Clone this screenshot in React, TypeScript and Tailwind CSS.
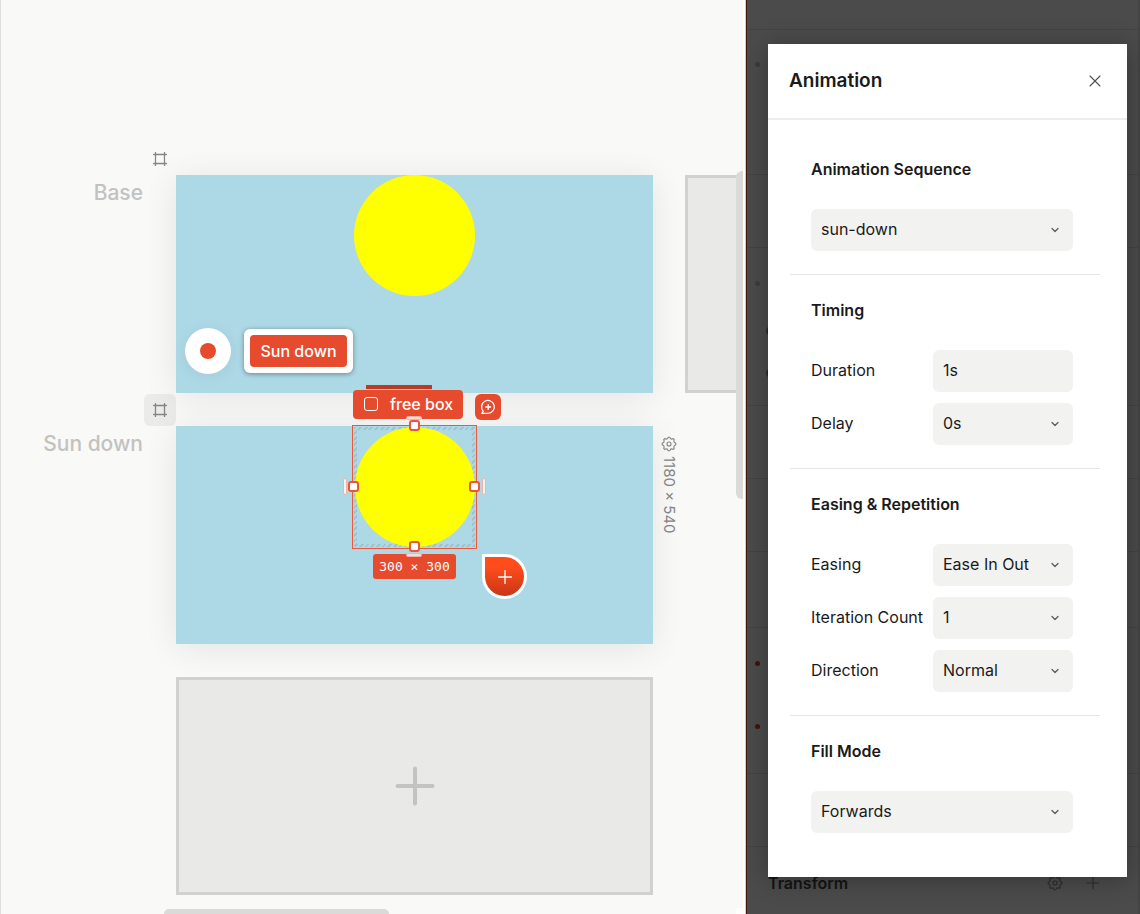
import type { ReactNode } from "react";
import { ChevronDown, Plus, X } from "lucide-react";

function GearIcon({ className = "" }: { className?: string }) {
  return (
    <svg viewBox="0 0 16 16" className={className} fill="none" stroke="currentColor" strokeWidth="1.1" strokeLinejoin="round" aria-hidden="true">
      <path d="M6.7 2.3 7.3 1.2h1.4l.6 1.1c.3.6 1 .9 1.7.7l1.3-.4 1 1-.4 1.3c-.2.7.1 1.4.7 1.7l1.2.7v1.4l-1.2.7c-.6.3-.9 1-.7 1.7l.4 1.3-1 1-1.3-.4c-.7-.2-1.4.1-1.7.7l-.6 1.1H7.3l-.6-1.1c-.3-.6-1-.9-1.7-.7l-1.3.4-1-1 .4-1.3c.2-.7-.1-1.4-.7-1.7l-1.2-.7V7.3l1.2-.7c.6-.3.9-1 .7-1.7l-.4-1.3 1-1L5 3c.7.2 1.4-.1 1.7-.7Z" />
      <circle cx="8" cy="8" r="2" />
    </svg>
  );
}

function FrameIcon() {
  return (
    <svg viewBox="0 0 14 14" className="size-[14px]" fill="none" stroke="currentColor" strokeWidth="1.3" strokeLinecap="round" aria-hidden="true">
      <path d="M.6 2.5h12.8M.6 11.5h12.8M2.5.6v12.8M11.5.6v12.8" />
    </svg>
  );
}

function CommentPlusIcon() {
  return (
    <svg viewBox="0 0 16 16" className="size-4" fill="none" stroke="currentColor" strokeWidth="1.3" strokeLinecap="round" strokeLinejoin="round" aria-hidden="true">
      <path d="M3.2 12.2A6.4 6.4 0 1 1 8.2 14.3H1.8C2.6 13.8 3 13 3.200 12.200Z" />
      <path d="M8.200 5.600v4.800M5.800 8h4.800" />
    </svg>
  );
}

const fieldClass =
  "h-[42px] w-full appearance-none rounded-md bg-[#f2f2f0] pb-0.5 pl-[10px] pr-8 text-base text-[#1a1a1a] outline-none";

function SelectField({ id, value, label }: { id: string; value: string; label?: string }) {
  return (
    <div className="relative">
      <select id={id} aria-label={label} defaultValue={value} className={fieldClass}>
        <option>{value}</option>
      </select>
      <ChevronDown className="pointer-events-none absolute right-3 top-[15px] size-3 text-[#5c5c5c]" strokeWidth={2.5} />
    </div>
  );
}

function FieldRow({ id, label, children }: { id: string; label: string; children: ReactNode }) {
  return (
    <div className="flex items-center justify-between">
      <label htmlFor={id} className="whitespace-nowrap pb-0.5">{label}</label>
      <div className="w-[140px]">{children}</div>
    </div>
  );
}

function Section({ title, children }: { title: string; children: ReactNode }) {
  return (
    <section className="border-b border-[#e6e6e6] pb-[23px] pl-[21px] pr-[27px] pt-[23px] last:border-b-0 last:pb-11">
      <h3 className="mb-7 text-base font-semibold leading-6">{title}</h3>
      <div className="flex flex-col gap-[11px]">{children}</div>
    </section>
  );
}

function AnimationDialog() {
  return (
    <div
      role="dialog"
      aria-labelledby="dialog-title"
      className="absolute left-[21px] right-[13px] top-11 bg-white text-[#1a1a1a] shadow-[0_2px_24px_rgba(0,0,0,0.3)]"
    >
      <header className="flex h-[76px] items-center justify-between border-b-2 border-[#ededed] pl-[21px] pr-[22px]">
        <h2 id="dialog-title" className="text-[19px] font-semibold leading-6">Animation</h2>
        <button type="button" aria-label="Close" className="text-[#555]">
          <X className="size-5" strokeWidth={1.4} />
        </button>
      </header>
      <div className="pl-[22px] pr-[27px] pt-[14px]">
        <Section title="Animation Sequence">
          <SelectField id="sequence" label="Animation Sequence" value="sun-down" />
        </Section>
        <Section title="Timing">
          <FieldRow id="duration" label="Duration">
            <input id="duration" type="text" defaultValue="1s" className={fieldClass} />
          </FieldRow>
          <FieldRow id="delay" label="Delay">
            <SelectField id="delay" value="0s" />
          </FieldRow>
        </Section>
        <Section title="Easing &amp; Repetition">
          <FieldRow id="easing" label="Easing">
            <SelectField id="easing" value="Ease In Out" />
          </FieldRow>
          <FieldRow id="iterations" label="Iteration Count">
            <SelectField id="iterations" value="1" />
          </FieldRow>
          <FieldRow id="direction" label="Direction">
            <SelectField id="direction" value="Normal" />
          </FieldRow>
        </Section>
        <Section title="Fill Mode">
          <SelectField id="fill" label="Fill Mode" value="Forwards" />
        </Section>
      </div>
    </div>
  );
}

function Dot({ className }: { className: string }) {
  return <span className={`block size-[5px] rounded-full ${className}`} />;
}

function StylePanel() {
  return (
    <aside className="relative w-[394px] shrink-0 border-l border-[#4a170c] bg-[#4b4b4b]">
      <div className="flex flex-col divide-y divide-[#434343] border-r-2 border-[#444]">
        <div className="h-[30px]" />
        <div className="h-[145px] pl-2 pt-8"><Dot className="bg-[#3c3c3c]" /></div>
        <div className="h-[73px]" />
        <div className="h-[158px] pl-2 pt-[33px]">
          <Dot className="bg-[#3c3c3c]" />
          <div className="ml-[11px] mt-10 flex w-4 flex-col gap-8">
            <span className="h-[10px] rounded-full border-2 border-[#2b2b2b]" />
            <span className="h-[10px] rounded-full border-2 border-[#2b2b2b]" />
          </div>
        </div>
        <div className="h-[73px]" />
        <div className="h-[73px]" />
        <div className="h-[76px]" />
        <div className="flex h-[146px] flex-col gap-[58px] pl-2 pt-[33px]">
          <Dot className="bg-[#43140b]" />
          <Dot className="bg-[#43140b]" />
        </div>
        <div className="h-[73px]" />
        <div className="flex h-[67px] items-center justify-between pl-[21px] pr-[35px] pt-1">
          <h2 className="text-base font-semibold text-[#141414]">Transform</h2>
          <div className="flex items-center gap-5 text-[#2c2c2c]">
            <button type="button" aria-label="Transform settings"><GearIcon className="size-4" /></button>
            <button type="button" aria-label="Add transform"><Plus className="size-5" strokeWidth={1.3} /></button>
          </div>
        </div>
      </div>
      <AnimationDialog />
    </aside>
  );
}

function ArtboardLabel({ name, active = false }: { name?: string; active?: boolean }) {
  return (
    <div className="-mt-8 flex w-[175px] shrink-0 flex-col items-end">
      {name && (
        <>
          <button
            type="button"
            aria-label={`${name} frame`}
            className={`grid size-8 place-items-center rounded-md text-[#858585] ${active ? "bg-[#ebebea]" : ""}`}
          >
            <FrameIcon />
          </button>
          <p className="pr-[33px] pt-1 text-[21px] font-medium leading-7 text-[#c2c2c1]">{name}</p>
        </>
      )}
    </div>
  );
}

const artboardClass = "relative h-[218px] w-[477px] shrink-0 bg-[#add8e6] shadow-[0_4px_32px_rgba(0,0,0,0.09)]";
const emptyClass = "border-[3px] border-[#d1d1cf] bg-[#e9e9e8]";
const handleClass = "absolute size-[11px] rounded-[3px] border-2 border-[#e8573b] bg-white";
const spacingClass = "absolute rounded-full border border-[#f0b3a6] bg-white/80";

function Selection() {
  return (
    <>
      <div className="absolute -top-[41px] left-[190px] h-1 w-[66px] bg-[#bd3a22]" />
      <div className="absolute -top-9 left-[177px] flex h-[29px] w-[110px] items-center gap-3 rounded bg-[#e64b2e] pb-0.5 pl-[11px] text-base font-medium text-white">
        <span className="size-[14px] rounded-[3px] border-[1.5px] border-white" />
        free box
      </div>
      <button
        type="button"
        aria-label="Add comment"
        className="absolute -top-8 left-[299px] grid size-[26px] place-items-center rounded-md bg-[#e64b2e] text-white"
      >
        <CommentPlusIcon />
      </button>
      <div className="absolute -top-px left-44 h-[124px] w-[125px] border border-[#e9573c]">
        <div className="absolute inset-px bg-[repeating-linear-gradient(135deg,#a2c3cd_0px,#a2c3cd_2px,#add8e6_2px,#add8e6_4px)]">
          <div className="absolute inset-[3px] bg-[#add8e6]" />
        </div>
        <div className="absolute left-0.5 top-px size-[120px] rounded-full bg-[#ffff00]" />
        <span className={`${spacingClass} -top-2.5 left-[53px] h-1 w-4`} />
        <span className={`${spacingClass} -left-2.5 top-[52px] h-[17px] w-1`} />
        <span className={`${spacingClass} -right-2.5 top-[52px] h-[17px] w-1`} />
        <span className={`${handleClass} -top-1.5 left-14`} />
        <span className={`${handleClass} -bottom-1 left-14`} />
        <span className={`${handleClass} -left-[5px] top-[55px]`} />
        <span className={`${handleClass} -right-1 top-[55px]`} />
      </div>
      <div className="absolute left-[197px] top-32 flex h-[25px] w-[83px] items-center justify-center rounded-[3px] bg-[#e64b2e] font-['DejaVu_Sans_Mono',monospace] text-[13px] text-white">
        300 × 300
      </div>
      <span className={`${spacingClass} left-[230px] top-[127px] h-1 w-4`} />
      <button
        type="button"
        aria-label="Insert element"
        className="absolute left-[306px] top-32 grid size-[45px] place-items-center rounded-full rounded-tl-md border-[3px] border-white bg-linear-to-b from-[#ff4c1c] from-25% to-[#c83716] text-white"
      >
        <Plus className="size-[22px]" strokeWidth={1.4} />
      </button>
    </>
  );
}

function Canvas() {
  return (
    <main className="relative min-w-0 flex-1 overflow-hidden border-l border-[#dededd] bg-[#f9f9f8]">
      <div className="flex flex-col gap-[33px] pt-[175px]">
        <div className="flex">
          <ArtboardLabel name="Base" />
          <div className={`${artboardClass} flex flex-col justify-between`}>
            <div className="size-[121px] self-center rounded-full bg-[#ffff00]" />
            <div className="flex items-center gap-[13px] px-[9px] pb-[19px]">
              <button type="button" aria-label="Record" className="grid size-[46px] place-items-center rounded-full bg-white shadow-[0_2px_16px_rgba(0,0,0,0.06)]">
                <span className="size-4 rounded-full bg-[#e64b2e]" />
              </button>
              <div className="rounded-md bg-white p-[6px] shadow-[0_1px_5px_rgba(0,0,0,0.4)]">
                <button type="button" className="h-8 w-[97px] rounded bg-[#e64b2e] text-base font-medium text-white">
                  Sun down
                </button>
              </div>
            </div>
          </div>
          <div className={`ml-8 w-[477px] shrink-0 ${emptyClass}`} />
        </div>
        <div className="flex">
          <ArtboardLabel name="Sun down" active />
          <div className={artboardClass}>
            <Selection />
          </div>
          <div className="ml-1 flex items-center gap-1 self-start whitespace-nowrap pt-[10px] text-[15px] leading-6 text-[#858585] [text-orientation:sideways] [writing-mode:vertical-rl]">
            <GearIcon className="size-4" />
            <span>1180 × 540</span>
          </div>
        </div>
        <div className="flex">
          <ArtboardLabel />
          <button type="button" aria-label="Add artboard" className={`grid h-[218px] w-[477px] shrink-0 place-items-center ${emptyClass}`}>
            <Plus className="size-[60px] text-[#c3c3c2]" strokeWidth={1.6} />
          </button>
        </div>
      </div>
      <div className="absolute inset-y-0 right-0 w-[3px] border-r border-[#cfcfcf] bg-white" />
      <div className="absolute right-[3px] top-[171px] h-[328px] w-[7px] rounded-l-md bg-[#dadad8]" />
      <div className="absolute bottom-0 left-[163px] h-[5px] w-[225px] rounded-t-md bg-[#dadad8]" />
      <div className="absolute bottom-0 right-[3px] h-[6px] w-[7px] bg-white" />
    </main>
  );
}

export default function App() {
  return (
    <div className="flex min-h-screen font-['Inter',sans-serif]">
      <Canvas />
      <StylePanel />
    </div>
  );
}
